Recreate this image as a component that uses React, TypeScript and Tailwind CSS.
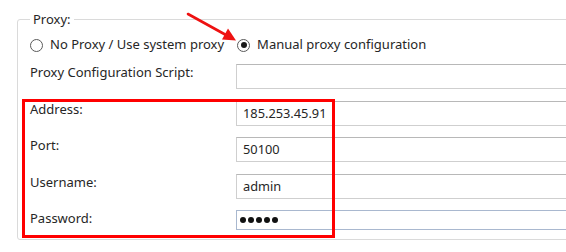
import React from "react";

const font = { fontFamily: '"Noto Sans", "Open Sans", sans-serif' };

function Radio({ checked }: { checked?: boolean }) {
  return (
    <span className="flex h-[13px] w-[13px] items-center justify-center rounded-full border border-[#5a5a5a] bg-white">
      {checked && <span className="h-[6px] w-[6px] rounded-full bg-[#1a1a1a]" />}
    </span>
  );
}

function Row({
  label,
  value,
  mt,
  h = "h-[25px]",
  focus,
  dots,
}: {
  label: string;
  value?: string;
  mt: string;
  h?: string;
  focus?: boolean;
  dots?: boolean;
}) {
  return (
    <div className={`flex ${mt}`}>
      <div className="w-[206px] shrink-0 text-[13px] leading-[17px] text-[#262626]">{label}</div>
      <div
        className={`${h} w-[400px] shrink-0 border bg-white text-[12.8px] leading-[22px] text-[#262626] ${
          focus ? "flex items-center gap-[2px] border-[#a9b8cf] pl-[3px]" : "border-[#cfcfcf] border-t-[#b8b8b8] pl-[6px]"
        }`}
      >
        {dots
          ? [0, 1, 2, 3, 4].map((i) => (
              <span key={i} className="h-[6px] w-[6px] rounded-full bg-[#111111]" />
            ))
          : value}
      </div>
    </div>
  );
}

export default function App() {
  return (
    <div className="relative h-[252px] w-[566px] overflow-hidden bg-white" style={font}>
      <fieldset className="ml-[17px] mt-[11px] w-[600px] rounded-[3px] border border-[#dadada] pb-[9px] pl-[12px]">
        <legend className="px-[3px] text-[13px] leading-[16px] text-[#262626]">Proxy:</legend>
        <div className="mt-[8px] flex h-[20px] items-center text-[13px] text-[#262626]">
          <Radio />
          <span className="ml-[7px]">No Proxy / Use system proxy</span>
          <span className="ml-[13px]">
            <Radio checked />
          </span>
          <span className="ml-[7px]">Manual proxy configuration</span>
        </div>
        <Row label="Proxy Configuration Script:" mt="mt-[9px]" />
        <Row label="Address:" value="185.253.45.91" mt="mt-[12px]" />
        <Row label="Port:" value="50100" mt="mt-[11px]" />
        <Row label="Username:" value="admin" mt="mt-[12px]" />
        <Row label="Password:" mt="mt-[11px]" h="h-[20px]" focus dots />
      </fieldset>

      <div className="pointer-events-none absolute left-[22px] top-[99px] h-[139px] w-[313px] border-[3px] border-[#ff0000]" />

      <svg className="pointer-events-none absolute left-0 top-0" width="566" height="252">
        <line x1="188" y1="14" x2="226" y2="35" stroke="#ee1111" strokeWidth="2.6" strokeLinecap="round" />
        <polygon points="236,40.5 222,39.5 228,28.5" fill="#ee1111" />
      </svg>
    </div>
  );
}
